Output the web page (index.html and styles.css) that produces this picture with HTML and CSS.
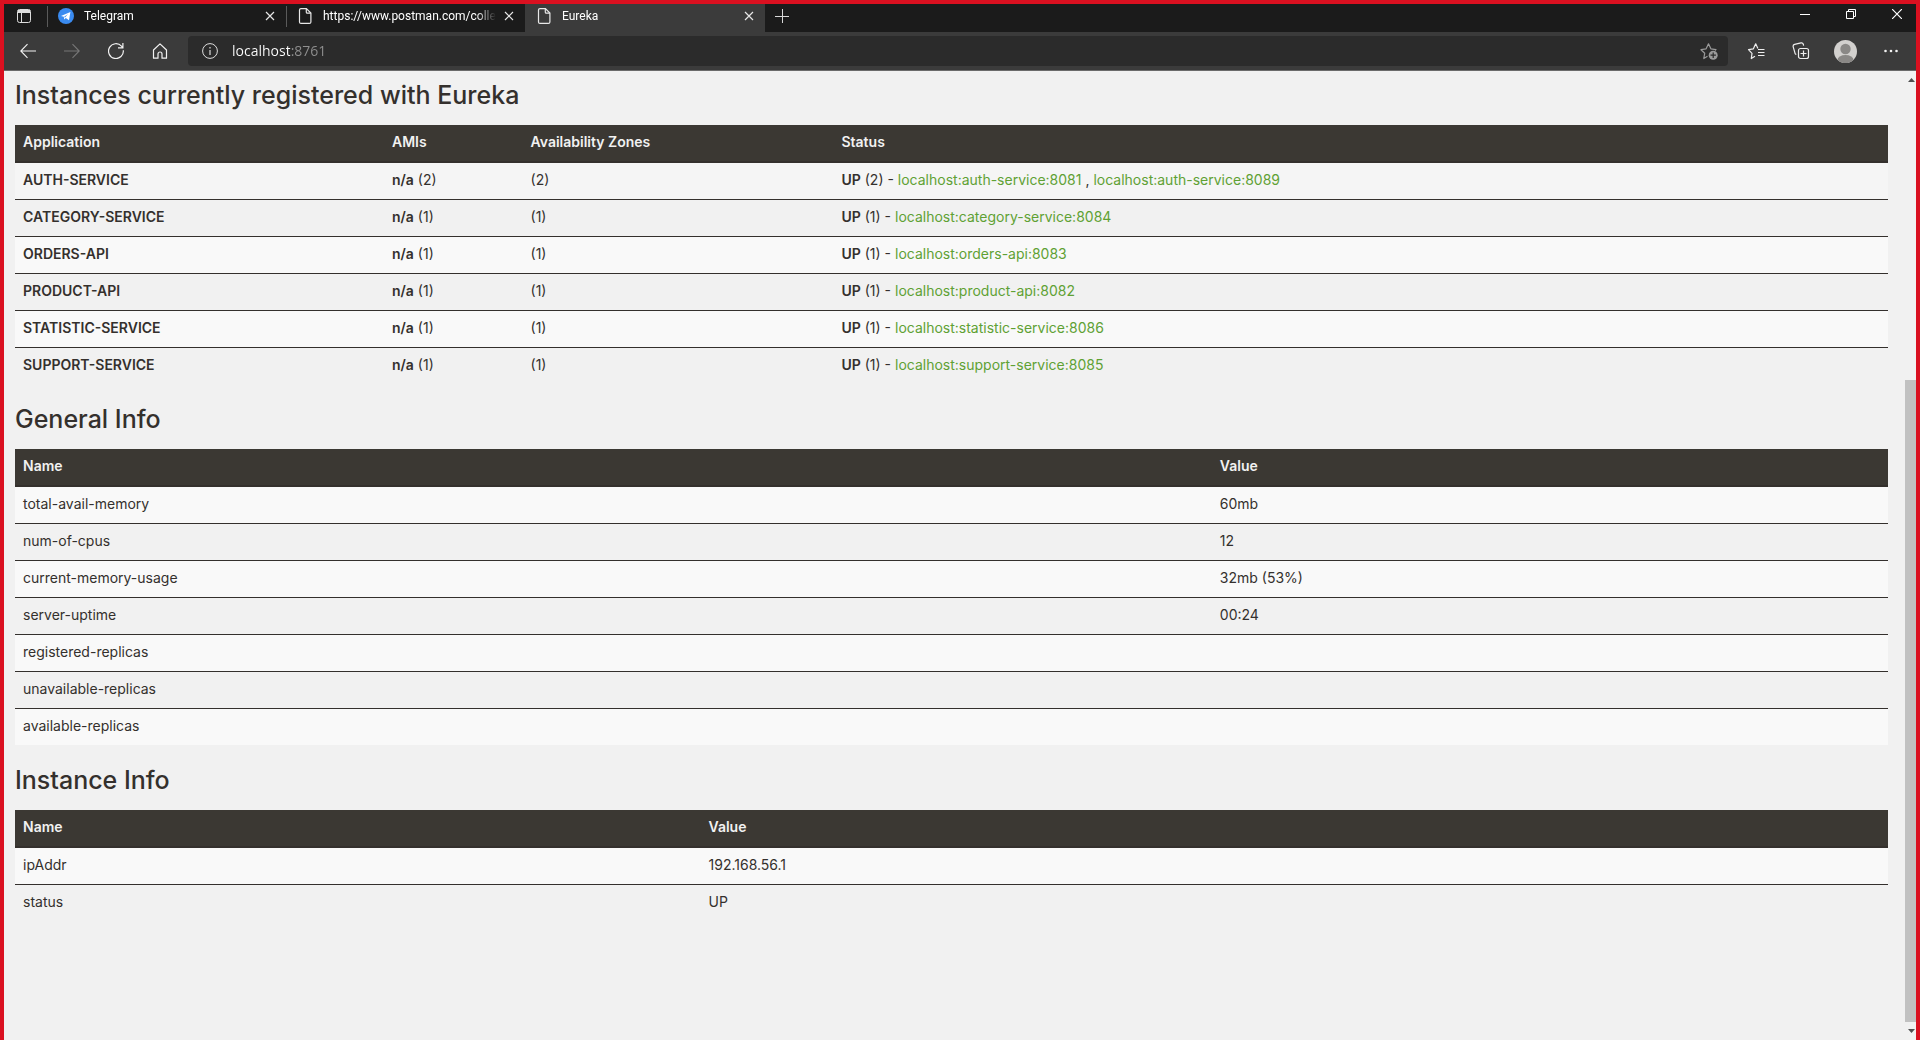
FILE: index.html
```html
<!DOCTYPE html>
<html lang="en">
<head>
<meta charset="utf-8">
<title>Eureka</title>
<link rel="stylesheet" href="styles.css">
</head>
<body>
<header class="browser">
  <div class="tab-strip">
    <button class="tab-actions" aria-label="Tab actions menu">
      <svg width="16" height="16" viewBox="0 0 16 16" fill="none" stroke="#dedede"><rect x="1.500" y="1.500" width="13" height="13" rx="2"/><path d="M2 3.500h12" stroke-width="3"/><path d="M5.500 5v9"/></svg>
    </button>
    <div class="tab">
      <svg class="favicon" viewBox="0 0 16 16"><circle cx="8" cy="8" r="8" fill="#3a8bf0"/><path d="M3 7.900l9.400-3.900-1.400 8.200-3.200-2.200-1.600 1.400-.4-2.600z" fill="#fff"/><path d="M6 9l4-3-3 3.600z" fill="#3a8bf0"/></svg>
      <span class="tab-title">Telegram</span>
      <button class="tab-close" aria-label="Close Telegram"><svg width="10" height="10" viewBox="0 0 10 10" stroke="#e6e6e6" stroke-width="1.200"><path d="M1 1l8 8M9 1l-8 8"/></svg></button>
    </div>
    <div class="tab">
      <svg class="favicon" viewBox="0 0 16 16" fill="none" stroke="#e8e8e8" stroke-width="1.200"><path d="M4 .6h5.400l4.500 4.500v8.800a1.500 1.500 0 0 1-1.500 1.500H4a1.500 1.500 0 0 1-1.500-1.500V2.100A1.500 1.500 0 0 1 4 .6z"/><path d="M9.300.8v3.400a1 1 0 0 0 1 1h3.500"/></svg>
      <span class="tab-title">https://www.postman.com/collec</span>
      <button class="tab-close" aria-label="Close postman"><svg width="10" height="10" viewBox="0 0 10 10" stroke="#e6e6e6" stroke-width="1.200"><path d="M1 1l8 8M9 1l-8 8"/></svg></button>
    </div>
    <div class="tab tab-active">
      <svg class="favicon" viewBox="0 0 16 16" fill="none" stroke="#e8e8e8" stroke-width="1.200"><path d="M4 .6h5.400l4.500 4.500v8.800a1.500 1.500 0 0 1-1.500 1.500H4a1.500 1.500 0 0 1-1.500-1.500V2.100A1.500 1.500 0 0 1 4 .6z"/><path d="M9.300.8v3.400a1 1 0 0 0 1 1h3.500"/></svg>
      <span class="tab-title">Eureka</span>
      <button class="tab-close" aria-label="Close Eureka"><svg width="10" height="10" viewBox="0 0 10 10" stroke="#e6e6e6" stroke-width="1.200"><path d="M1 1l8 8M9 1l-8 8"/></svg></button>
    </div>
    <button class="new-tab" aria-label="New tab"><svg width="14" height="14" viewBox="0 0 14 14" stroke="#d8d8d8"><path d="M0 7.500h14M7.500 0v14"/></svg></button>
    <div class="window-controls">
      <button aria-label="Minimize"><svg width="10" height="10" viewBox="0 0 10 10" stroke="#fff"><path d="M0 5.500h10"/></svg></button>
      <button aria-label="Restore"><svg width="10" height="10" viewBox="0 0 10 10" fill="none" stroke="#fff"><path d="M.5 2.500h7v7h-7zM2.500 2.500v-2h7v7h-2"/></svg></button>
      <button aria-label="Close window"><svg width="10" height="10" viewBox="0 0 10 10" stroke="#fff" stroke-width="1.200"><path d="M0 0l10 10M10 0L0 10"/></svg></button>
    </div>
  </div>
  <div class="toolbar">
    <button aria-label="Back"><svg width="16" height="16" viewBox="0 0 16 16" fill="none" stroke="#f2f2f2" stroke-width="1.100"><path d="M.8 8H16M7.500 1.200L.8 8l6.700 6.800"/></svg></button>
    <button aria-label="Forward" disabled><svg width="16" height="16" viewBox="0 0 16 16" fill="none" stroke="#777" stroke-width="1.100"><path d="M0 8h15.200M8.500 1.200L15.200 8l-6.700 6.800"/></svg></button>
    <button aria-label="Refresh"><svg width="16" height="16" viewBox="0 0 16 16" fill="none" stroke="#f2f2f2" stroke-width="1.200"><path d="M15.300 7.200a7.400 7.400 0 1 1-1.800-4l1 1.200M14.900 0v4.900H10"/></svg></button>
    <button aria-label="Home"><svg width="16" height="16" viewBox="0 0 16 16" fill="none" stroke="#f2f2f2" stroke-width="1.200"><path d="M1.500 7L8 .9 14.500 7v8.200H10V11a2 2 0 0 0-4 0v4.200H1.500z" stroke-linejoin="round"/></svg></button>
    <div class="address-bar">
      <svg width="16" height="16" viewBox="0 0 16 16" fill="none" stroke="#ddd"><circle cx="8" cy="8" r="7.400"/><path d="M8 7v5M8 4v1.500" stroke-width="1.200"/></svg>
      <input class="address" type="text" aria-label="Address" value="localhost:8761">
      <button class="add-favorite" aria-label="Add to favorites"><svg width="18" height="18" viewBox="0 0 18 18" fill="none" stroke="#9a9a9a" stroke-width="1.200"><path d="M7.500 14.200l-3.700 2.300.9-5.200L1 7.700l5.100-.9L8.500 1.800l2.400 5 5.100.9-1 1" stroke-linejoin="round"/><circle cx="13.200" cy="13.200" r="4.500" fill="#9a9a9a" stroke="none"/><path d="M13.200 10.500v5.400M10.500 13.200h5.400" stroke="#2b2b2b"/></svg></button>
    </div>
    <button aria-label="Favorites"><svg width="18" height="18" viewBox="0 0 18 18" fill="none" stroke="#eee" stroke-width="1.200"><path d="M8 14.200l-3.700 2.300.7-5.200L1.500 7.700l4.900-.9L8.700 1.800l2.200 4.700M11 7.500h6.500M11 10.500h6.500M11 13.500h6.500" stroke-linejoin="round"/></svg></button>
    <button aria-label="Collections"><svg width="18" height="18" viewBox="0 0 18 18" fill="none" stroke="#eee" stroke-width="1.200"><path d="M4.300 12.500A2 2 0 0 1 3 11.200L1.200 4.800a2 2 0 0 1 1.400-2.400l6.400-1.500a2 2 0 0 1 2.300 1.300l.3 1.400"/><rect x="6.500" y="6.500" width="10" height="10" rx="2"/><path d="M11.500 8.500v6M8.500 11.500h6"/></svg></button>
    <button aria-label="Profile"><svg width="23" height="23" viewBox="0 0 23 23"><clipPath id="disc"><circle cx="11.500" cy="11.500" r="11.500"/></clipPath><g clip-path="url(#disc)"><path d="M0 0h23v23H0z" fill="#d2d0ce"/><circle cx="11.500" cy="9" r="5.200" fill="#8a8886"/><ellipse cx="11.500" cy="20" rx="8" ry="5" fill="#8a8886"/></g></svg></button>
    <button aria-label="Settings and more"><svg width="14" height="4" viewBox="0 0 14 4" fill="#f2f2f2"><circle cx="1.500" cy="2" r="1.300"/><circle cx="7" cy="2" r="1.300"/><circle cx="12.500" cy="2" r="1.300"/></svg></button>
  </div>
</header>
<div class="viewport">
  <main class="content">
    <h1>Instances currently registered with Eureka</h1>
    <table class="instances">
      <colgroup><col class="col-app"><col class="col-ami"><col class="col-zone"><col></colgroup>
      <thead><tr><th>Application</th><th>AMIs</th><th>Availability Zones</th><th>Status</th></tr></thead>
      <tbody>
        <tr><td><b>AUTH-SERVICE</b></td><td><b>n/a</b> (2)</td><td>(2)</td><td><b>UP</b> (2) - <a href="#">localhost:auth-service:8081</a> , <a href="#">localhost:auth-service:8089</a></td></tr>
        <tr><td><b>CATEGORY-SERVICE</b></td><td><b>n/a</b> (1)</td><td>(1)</td><td><b>UP</b> (1) - <a href="#">localhost:category-service:8084</a></td></tr>
        <tr><td><b>ORDERS-API</b></td><td><b>n/a</b> (1)</td><td>(1)</td><td><b>UP</b> (1) - <a href="#">localhost:orders-api:8083</a></td></tr>
        <tr><td><b>PRODUCT-API</b></td><td><b>n/a</b> (1)</td><td>(1)</td><td><b>UP</b> (1) - <a href="#">localhost:product-api:8082</a></td></tr>
        <tr><td><b>STATISTIC-SERVICE</b></td><td><b>n/a</b> (1)</td><td>(1)</td><td><b>UP</b> (1) - <a href="#">localhost:statistic-service:8086</a></td></tr>
        <tr><td><b>SUPPORT-SERVICE</b></td><td><b>n/a</b> (1)</td><td>(1)</td><td><b>UP</b> (1) - <a href="#">localhost:support-service:8085</a></td></tr>
      </tbody>
    </table>
    <h1>General Info</h1>
    <table>
      <colgroup><col class="col-general"><col></colgroup>
      <thead><tr><th>Name</th><th>Value</th></tr></thead>
      <tbody>
        <tr><td>total-avail-memory</td><td>60mb</td></tr>
        <tr><td>num-of-cpus</td><td>12</td></tr>
        <tr><td>current-memory-usage</td><td>32mb (53%)</td></tr>
        <tr><td>server-uptime</td><td>00:24</td></tr>
        <tr><td>registered-replicas</td><td></td></tr>
        <tr><td>unavailable-replicas</td><td></td></tr>
        <tr><td>available-replicas</td><td></td></tr>
      </tbody>
    </table>
    <h1>Instance Info</h1>
    <table>
      <colgroup><col class="col-instance"><col></colgroup>
      <thead><tr><th>Name</th><th>Value</th></tr></thead>
      <tbody>
        <tr><td>ipAddr</td><td>192.168.56.1</td></tr>
        <tr><td>status</td><td>UP</td></tr>
      </tbody>
    </table>
  </main>
  <div class="scrollbar">
    <svg width="7" height="4" viewBox="0 0 7 4" fill="#505050"><path d="M0 4h7L3.500 0z"/></svg>
    <div class="track"><div class="thumb"></div></div>
    <svg width="7" height="4" viewBox="0 0 7 4" fill="#505050"><path d="M0 0h7L3.500 4z"/></svg>
  </div>
</div>
</body>
</html>
```
FILE: styles.css
```css
* { box-sizing: border-box; }

body {
  margin: 0;
  height: 100vh;
  display: flex;
  flex-direction: column;
  overflow: hidden;
  border: 4px solid #da1020;
  border-bottom: 0;
  background: #f1f1f1;
  color: #34302d;
  font: 14px/20px Inter, sans-serif;
}

button {
  display: flex;
  align-items: center;
  justify-content: center;
  padding: 0;
  border: 0;
  background: none;
}

svg { display: block; flex: none; }

/* Browser chrome */
.tab-strip {
  display: flex;
  height: 28px;
  background: #1b1b1b;
}
.tab-actions { width: 43px; padding-right: 3px; padding-bottom: 4px; }
.tab {
  position: relative;
  display: flex;
  align-items: center;
  width: 239px;
  padding: 0 8px 4px 11px;
  color: #fff;
  font: 12px/16px Roboto, sans-serif;
}
.tab:not(.tab-active)::before {
  content: "";
  position: absolute;
  left: 0;
  top: 2px;
  width: 1px;
  height: 21px;
  background: #5a5a5a;
}
.tab-active { width: 240px; background: #3b3b3b; }
.favicon { width: 16px; height: 16px; margin-right: 10px; }
.tab-title {
  flex: 1;
  overflow: hidden;
  white-space: nowrap;
  margin-right: 5px;
  mask-image: linear-gradient(to right, #000 calc(100% - 20px), transparent);
}
.tab-close { width: 16px; height: 16px; }
.new-tab { width: 34px; padding-bottom: 4px; }
.window-controls { display: flex; margin-left: auto; margin-right: -4px; }
.window-controls button { width: 46px; padding-bottom: 8px; }

.toolbar {
  display: flex;
  align-items: center;
  height: 39px;
  padding: 0 3px 0 2px;
  background: #3b3b3b;
  border-bottom: 1px solid #6b6b6b;
}
.toolbar > button { width: 44px; height: 30px; }
.toolbar > .address-bar ~ button { width: 45px; }
.address-bar {
  flex: 1;
  display: flex;
  align-items: center;
  height: 30px;
  margin: 0 5px 0 6px;
  padding: 0 10px 0 14px;
  border-radius: 4px;
  background: #2b2b2b;
}
.address {
  flex: 1;
  margin-left: 14px;
  padding: 0;
  border: 0;
  outline: 0;
  color: #fff;
  font: 14px/20px "Open Sans", sans-serif;
  background: linear-gradient(to right, #fff 58px, #8f8f8f 58px);
  background-clip: text;
  -webkit-text-fill-color: transparent;
}

/* Page */
.viewport { flex: 1; display: flex; min-height: 0; }
.content { flex: 1; padding: 9px 15px 0 11px; overflow: hidden; }

h1 {
  margin: 0 0 15px;
  font: 500 25px/30px Inter, sans-serif;
}

table {
  width: 100%;
  margin-bottom: 20px;
  border-collapse: separate;
  border-spacing: 0;
  table-layout: fixed;
}
.col-app { width: 19.7%; }
.col-ami { width: 7.4%; }
.col-zone { width: 16.6%; }
.col-general { width: 63.9%; }
.col-instance { width: 36.6%; }

th, td { padding: 7px 8px; text-align: left; vertical-align: top; height: 36px; }
th {
  height: 38px;
  background: #3b3833;
  color: #f1f1f1;
  font-weight: 600;
  border-bottom: 2px solid #34302d;
}
td { height: 37px; border-top: 1px solid #34302d; }
tbody tr:first-child td { height: 36px; border-top: 0; }
tbody tr:nth-child(odd) { background: #f9f9f9; }
.instances tbody tr:first-child { background: #f5f5f5; }
b { font-weight: 600; }
a { color: #5fa134; text-decoration: none; }

.scrollbar {
  width: 13px;
  display: flex;
  flex-direction: column;
  align-items: center;
  padding: 7px 0;
}
.scrollbar svg { margin-left: 3px; }
.track { flex: 1; width: 100%; padding: 298px 0 7px 2px; }
.thumb { height: 100%; background: #c1c1c1; }
```
